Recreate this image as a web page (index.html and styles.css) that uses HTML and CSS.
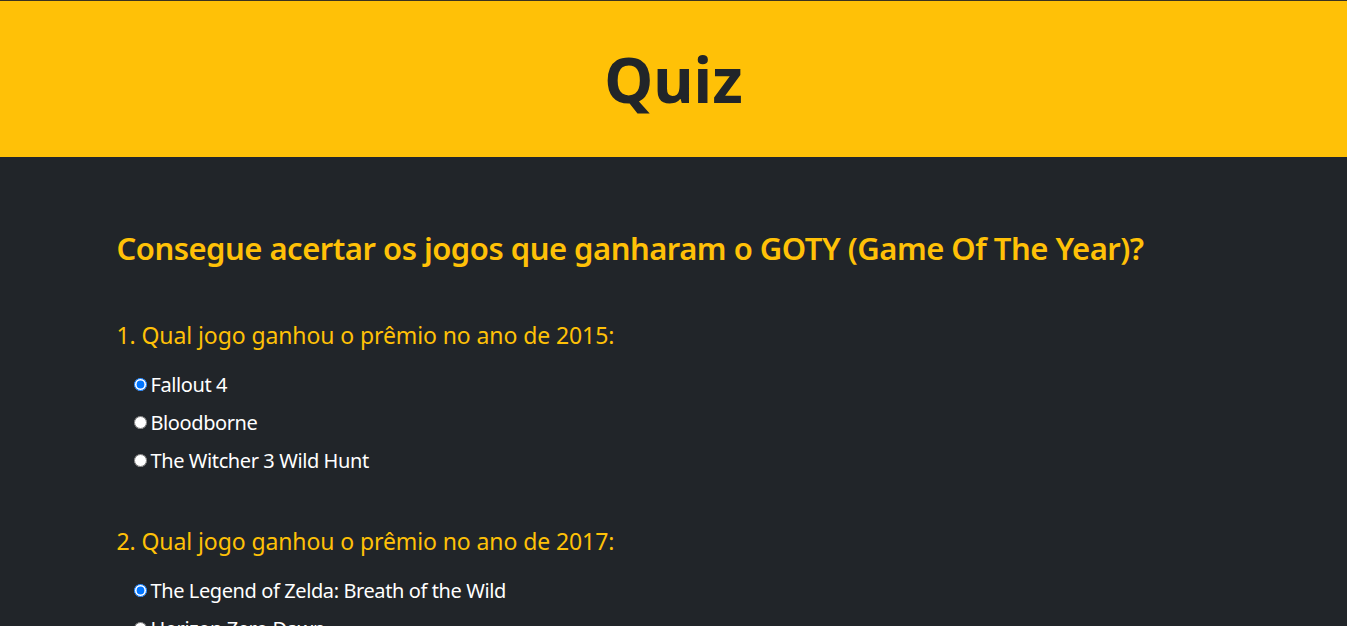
FILE: index.html
```html
<!DOCTYPE html>
<html lang="pt-br">
<head>
<meta charset="utf-8">
<title>Quiz</title>
<link rel="stylesheet" href="styles.css">
</head>
<body>
<header class="site-header">
  <h1 class="site-title">Quiz</h1>
</header>
<main class="container">
  <h2 class="quiz-title">Consegue acertar os jogos que ganharam o GOTY (Game Of The Year)?</h2>
  <section class="question">
    <h3 class="question-title">1. Qual jogo ganhou o prêmio no ano de 2015:</h3>
    <label class="option"><input type="radio" name="q1" checked>Fallout 4</label>
    <label class="option"><input type="radio" name="q1">Bloodborne</label>
    <label class="option"><input type="radio" name="q1">The Witcher 3 Wild Hunt</label>
  </section>
  <section class="question">
    <h3 class="question-title">2. Qual jogo ganhou o prêmio no ano de 2017:</h3>
    <label class="option"><input type="radio" name="q2" checked>The Legend of Zelda: Breath of the Wild</label>
    <label class="option"><input type="radio" name="q2">Horizon Zero Dawn</label>
    <label class="option"><input type="radio" name="q2">Super Mario Odyssey</label>
  </section>
</main>
</body>
</html>
```
FILE: styles.css
```css
*, *::before, *::after {
  box-sizing: border-box;
}
html, body {
  margin: 0;
  padding: 0;
}
body {
  background: #212529;
  font-family: "Noto Sans", "Open Sans", sans-serif;
  color: #fff;
}
.site-header {
  background: #ffc107;
  border-top: 1px solid #3a3321;
  height: 157px;
  display: flex;
  align-items: center;
  justify-content: center;
}
.site-title {
  margin: 0;
  font-size: 62px;
  font-weight: 700;
  line-height: 1.2;
  color: #212529;
}
.container {
  max-width: 1140px;
  margin: 0 auto;
  padding: 72px 13px 40px;
}
.quiz-title {
  margin: 0 0 54px;
  font-size: 31px;
  font-weight: 600;
  letter-spacing: -0.5px;
  line-height: 38px;
  color: #ffc107;
}
.question {
  margin-bottom: 48px;
}
.question-title {
  margin: 0 0 15px;
  font-size: 23px;
  font-weight: 400;
  letter-spacing: -0.1px;
  line-height: 29px;
  color: #ffc107;
}
.option {
  display: flex;
  align-items: center;
  height: 38px;
  padding-left: 12px;
  font-size: 20px;
  letter-spacing: -0.4px;
  color: #fff;
}
.option input {
  margin: 0 4px 0 5px;
  width: 13px;
  height: 13px;
}
```
